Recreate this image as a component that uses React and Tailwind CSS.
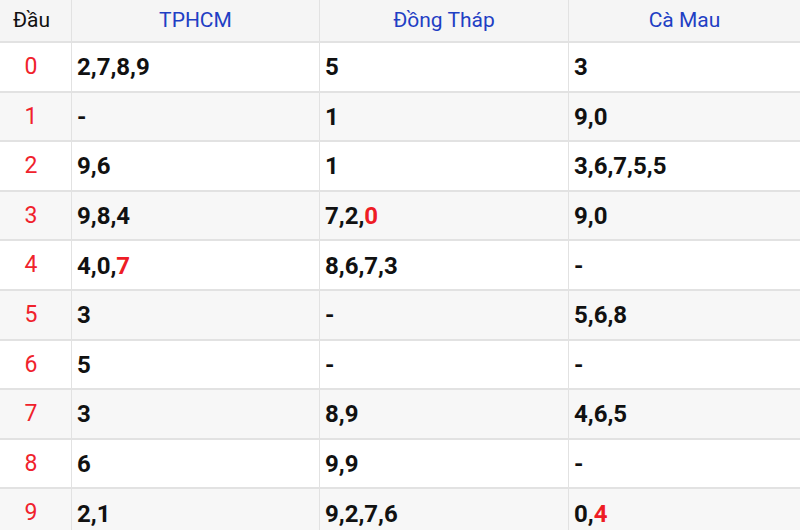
import React from "react";

const rows = [
  ["2,7,8,9", "5", "3"],
  ["-", "1", "9,0"],
  ["9,6", "1", "3,6,7,5,5"],
  ["9,8,4", ["7,2,", "0"], "9,0"],
  [["4,0,", "7"], "8,6,7,3", "-"],
  ["3", "-", "5,6,8"],
  ["5", "-", "-"],
  ["3", "8,9", "4,6,5"],
  ["6", "9,9", "-"],
  ["2,1", "9,2,7,6", ["0,", "4"]],
];

function Val({ v }) {
  if (Array.isArray(v)) {
    return (
      <>
        {v[0]}
        <span className="text-[#ee1c25]">{v[1]}</span>
      </>
    );
  }
  return v;
}

export default function App() {
  return (
    <div
      className="w-[800px] h-[530px] overflow-hidden bg-white"
      style={{ fontFamily: "Roboto, 'Liberation Sans', sans-serif" }}
    >
      <div className="grid grid-cols-[72px_248px_249px_1fr] h-[43px] bg-[#f5f5f5] border-b-2 border-[#e2e2e2] box-border text-[21px]">
        <div className="flex items-center justify-center pr-[8px] pt-[1px] border-r border-[#e2e2e2] text-[#111]">Đầu</div>
        <div className="flex items-center justify-center pt-[1px] border-r border-[#e2e2e2] text-[#1f3fc4]">TPHCM</div>
        <div className="flex items-center justify-center pt-[1px] border-r border-[#e2e2e2] text-[#1f3fc4]">Đồng Tháp</div>
        <div className="flex items-center justify-center pt-[1px] text-[#1f3fc4]">Cà Mau</div>
      </div>
      {rows.map((r, i) => (
        <div
          key={i}
          className={
            "grid grid-cols-[72px_248px_249px_1fr] h-[49.6px] border-b-2 border-[#e2e2e2] box-border " +
            (i % 2 === 1 ? "bg-[#f7f7f7]" : "bg-white")
          }
        >
          <div className="flex items-center justify-center pr-[9px] pt-[1px] border-r border-[#e2e2e2] text-[#f0222c] text-[23px]">
            {i}
          </div>
          {r.map((v, j) => (
            <div
              key={j}
              className={
                "flex items-center pl-[5px] pt-[1px] font-bold text-[24px] text-[#111] " +
                (j < 2 ? "border-r border-[#e2e2e2]" : "")
              }
            >
              <span>
                <Val v={v} />
              </span>
            </div>
          ))}
        </div>
      ))}
    </div>
  );
}
